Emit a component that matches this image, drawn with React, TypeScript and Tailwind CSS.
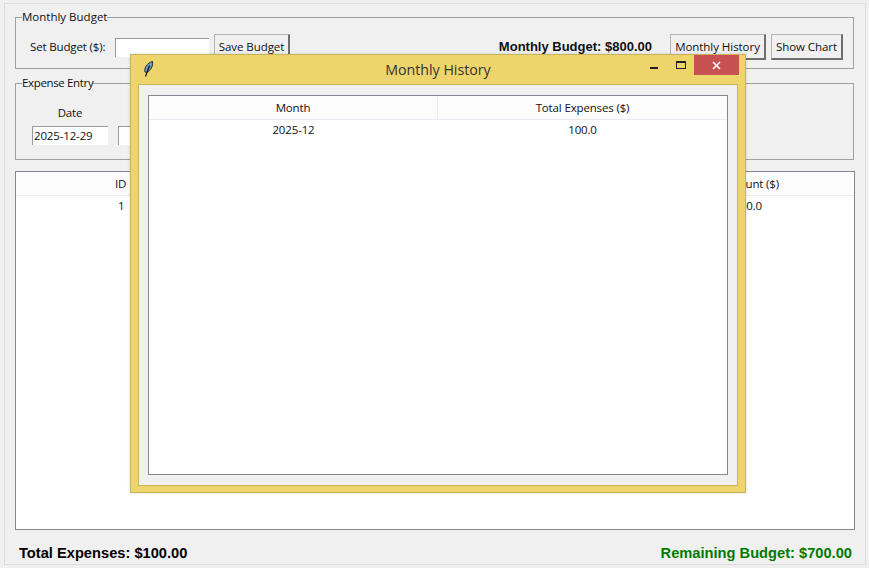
import React from "react";

const seg = "font-['Open_Sans','Noto_Sans',sans-serif] text-[11.5px] tracking-[-0.15px] leading-[16px] text-[#111]";
const btnText = "font-['Open_Sans','Noto_Sans',sans-serif] text-[11.5px] tracking-[-0.05px] leading-[16px] text-[#111]";

function TkButton({ w, children }: { w: string; children: React.ReactNode }) {
  return (
    <div className={`${w} h-[26px] flex items-center justify-center bg-[#f0f0f0] border border-[#b4b4b4] border-r-[#6e6e6e] border-b-[#6e6e6e] border-r-2 border-b-2 ${btnText}`}>
      {children}
    </div>
  );
}

function Entry({ w, value }: { w: string; value?: string }) {
  return (
    <div className={`${w} h-[19px] bg-white border-l border-t border-[#9a9a9a] pl-[1px] flex items-center ${seg}`}>
      {value}
    </div>
  );
}

export default function App() {
  return (
    <div className="relative w-[869px] h-[568px] bg-[#f0f0f0] overflow-hidden pt-[3px] pl-[4px] pr-[3px]">
      <div className="w-[862px] h-[562px] border border-[#dcdcdc] px-[10px] flex flex-col">
        <fieldset className="mt-[5px] h-[60px] w-[839px] border border-[#a0a0a0] pl-[6px] pr-[10px] flex">
          <legend className="font-['Open_Sans','Noto_Sans',sans-serif] text-[11.5px] leading-[16px] text-[#111]">Monthly Budget</legend>
          <div className="flex items-center w-full h-[26px] mt-[9px]">
            <span className={`${seg} ml-[8px] w-[77px] whitespace-nowrap`}>Set Budget ($):</span>
            <div className="ml-[8px]"><Entry w="w-[94px]" /></div>
            <div className="ml-[5px]"><TkButton w="w-[76px]">Save Budget</TkButton></div>
            <span className="ml-auto font-['Liberation_Sans',sans-serif] font-bold text-[13px] text-[#111]">Monthly Budget: $800.00</span>
            <div className="ml-[18px]"><TkButton w="w-[96px]">Monthly History</TkButton></div>
            <div className="ml-[5px]"><TkButton w="w-[72px]">Show Chart</TkButton></div>
          </div>
        </fieldset>

        <fieldset className="mt-[6px] h-[85px] w-[839px] border border-[#a0a0a0] pl-[16px]">
          <legend className="font-['Open_Sans','Noto_Sans',sans-serif] text-[11.5px] tracking-[-0.35px] leading-[16px] text-[#111] ml-[-10px]">Expense Entry</legend>
          <div className="flex gap-[10px] mt-[14px]">
            <div className="flex flex-col items-center w-[76px]">
              <span className={seg}>Date</span>
              <div className="mt-[5px]"><Entry w="w-[76px]" value="2025-12-29" /></div>
            </div>
            <div className="flex flex-col mt-[21px]"><Entry w="w-[30px]" /></div>
          </div>
        </fieldset>

        <div className="mt-[11px] h-[359px] w-[840px] bg-white border border-[#828790] flex flex-col">
          <div className="h-[24px] bg-[#fcfcfd] border-b border-[#e8edf3] flex items-center">
            <span className={`${seg} ml-[99px]`}>ID</span>
            <span className={`${seg} ml-auto mr-[75px]`}>Amount ($)</span>
          </div>
          <div className="h-[20px] flex items-center">
            <span className={`${seg} ml-[102px]`}>1</span>
            <span className={`${seg} ml-auto mr-[92px]`}>100.0</span>
          </div>
        </div>

        <div className="flex justify-between items-center font-['Liberation_Sans',sans-serif] font-bold text-[14.67px] mt-[12px] pl-[4px] pr-[3px] w-[840px]">
          <span className="text-black">Total Expenses: $100.00</span>
          <span className="text-[#007a00]">Remaining Budget: $700.00</span>
        </div>
      </div>

      {/* Floating Monthly History window */}
      <div className="absolute left-[130px] top-[54px] w-[616px] h-[439px] bg-[#eed56b] border border-[#c9b45c] flex flex-col shadow-[0_0_3px_rgba(0,0,0,0.15)]">
        <div className="relative h-[29px] shrink-0 flex items-center justify-center">
          <svg className="absolute left-[12px] top-[6px]" width="11" height="16" viewBox="0 0 11 16">
            <path d="M2 11C1 7 4 2 9.5 0.5c1 4-2 9.5-6 11z" fill="#6c9cc8" stroke="#1d2a3a" strokeWidth="1" />
            <path d="M6.5 4.5L2.5 15.5" stroke="#111" strokeWidth="1.2" fill="none" />
          </svg>
          <span className="font-['Open_Sans','Noto_Sans',sans-serif] text-[14.2px] leading-[20px] text-[#333]">Monthly History</span>
          <div className="absolute left-[519px] top-[12px] w-[8px] h-[2px] bg-[#222]" />
          <div className="absolute left-[545px] top-[6px] w-[10px] h-[8px] border border-[#222] border-t-2" />
          <div className="absolute left-[563px] top-0 w-[45px] h-[20px] bg-[#c75050] flex items-center justify-center">
            <svg width="9" height="9" viewBox="0 0 9 9">
              <path d="M1 1L8 8M8 1L1 8" stroke="#fff" strokeWidth="1.6" fill="none" />
            </svg>
          </div>
        </div>
        <div className="mx-[7px] h-[402px] bg-[#f0f0f0] border border-[#c9b45c] px-[9px] pt-[10px]">
          <div className="w-[580px] h-[380px] bg-white border border-[#828790] flex flex-col">
            <div className="h-[24px] flex bg-[#fcfcfd] border-b border-[#e8edf3] w-[578px]">
              <div className={`w-[289px] border-r border-[#e8edf3] flex items-center justify-center ${seg}`}>Month</div>
              <div className={`flex-1 flex items-center justify-center ${seg}`}>Total Expenses ($)</div>
            </div>
            <div className="h-[20px] flex w-[578px]">
              <div className={`w-[289px] flex items-center justify-center ${seg}`}>2025-12</div>
              <div className={`flex-1 flex items-center justify-center ${seg}`}>100.0</div>
            </div>
          </div>
        </div>
      </div>
    </div>
  );
}
